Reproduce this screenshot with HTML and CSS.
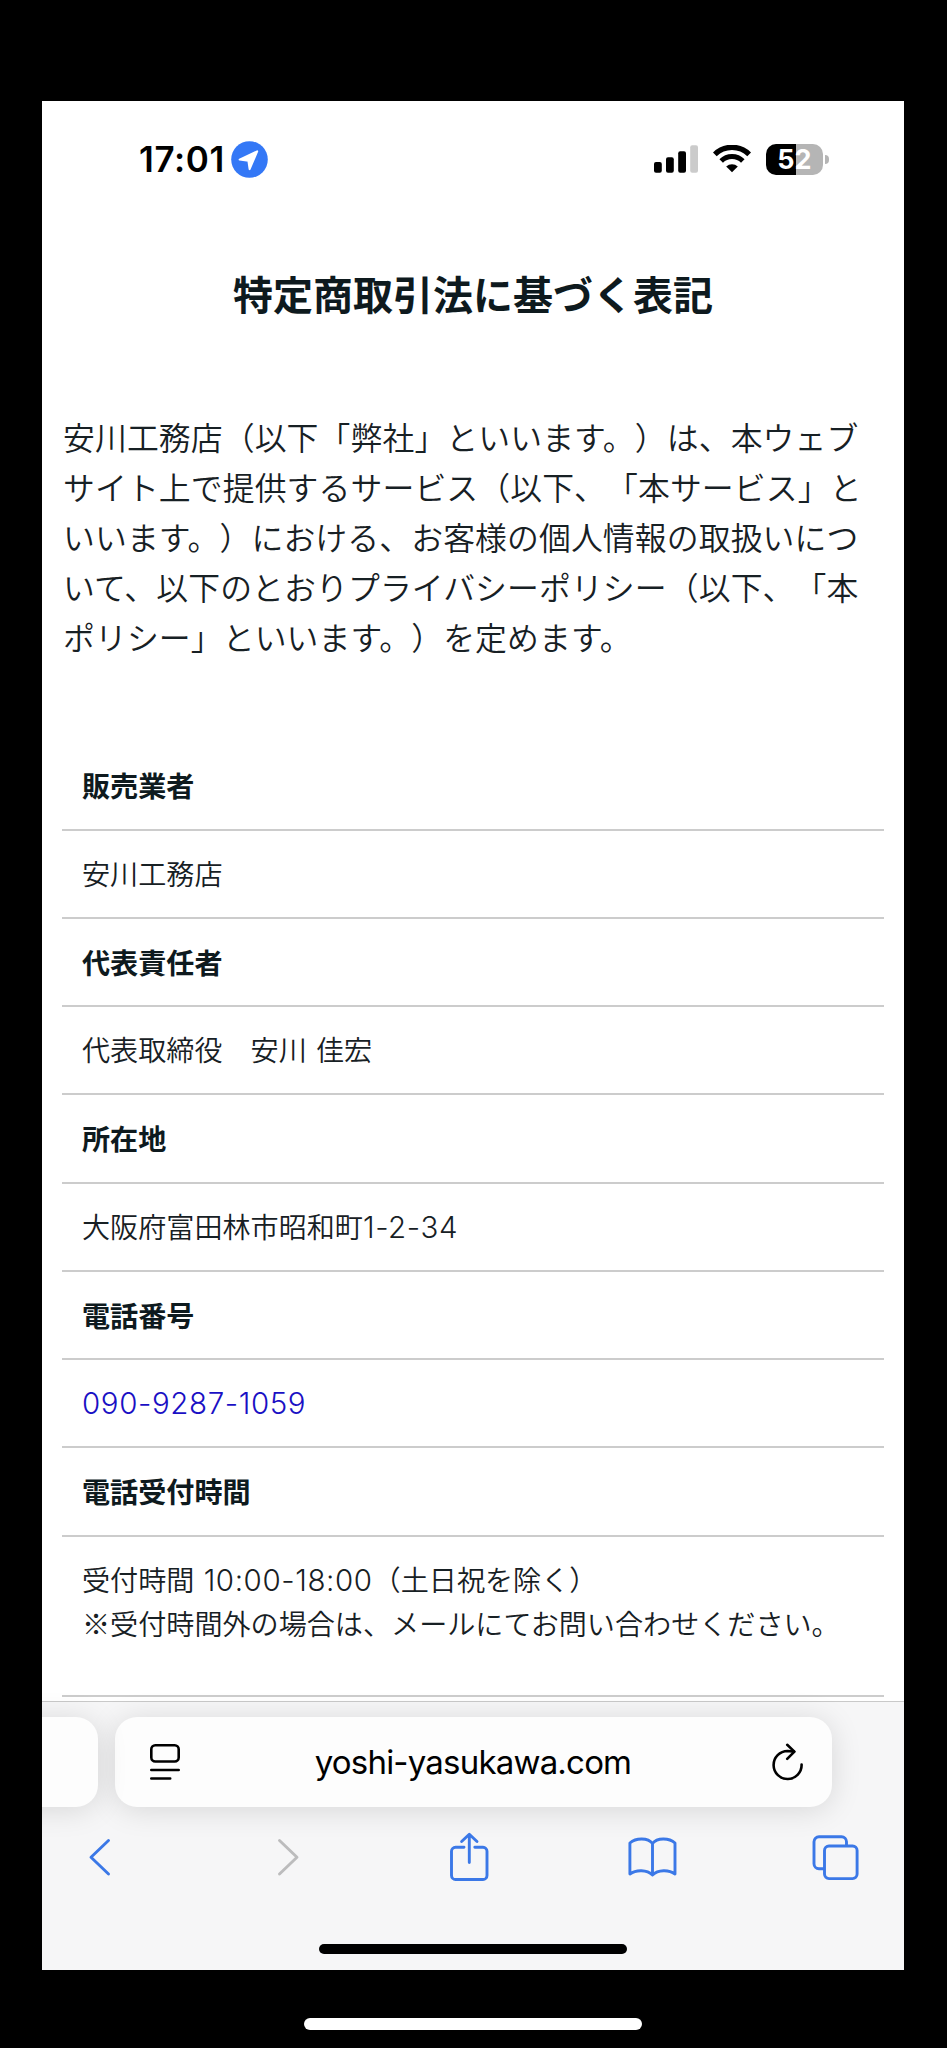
FILE: index.html
```
<!DOCTYPE html>
<html lang="ja">
<head>
    <meta charset="UTF-8">
    <meta name="viewport" content="width=device-width, initial-scale=1.0">
    <title>特定商取引法に基づく表記</title>
    <link rel="stylesheet" href="styles.css">
</head>
<body>

<div class="screen">

    <!-- Status bar -->
    <div class="status-bar">
        <span class="time">17:01</span>
        <svg class="location" width="37" height="37" viewBox="0 0 37 37">
            <circle cx="18.5" cy="18.5" r="18.3" fill="#3478f6"/>
            <path d="M26.2 10.4 L18.6 28.2 L17.4 19.8 L8.6 18.6 Z" fill="#fff" stroke="#fff" stroke-width="2" stroke-linejoin="round"/>
        </svg>
        <div class="status-icons">
            <svg width="44" height="28" viewBox="0 0 44 28">
                <rect x="0" y="17" width="7.8" height="10.7" rx="2"/>
                <rect x="12" y="12.2" width="7.8" height="15.5" rx="2"/>
                <rect x="24.2" y="6.2" width="7.8" height="21.5" rx="2"/>
                <rect x="36.2" y="0.3" width="7.8" height="27.4" rx="2" fill="#cbcbcb"/>
            </svg>
            <svg class="wifi" width="38" height="28" viewBox="0 0 38 28">
                <path d="M1.8 9.4 A24.5 24.5 0 0 1 36.2 9.4" fill="none" stroke="#000" stroke-width="5.4"/>
                <path d="M8.2 15.9 A15.3 15.3 0 0 1 29.8 15.9" fill="none" stroke="#000" stroke-width="5"/>
                <path d="M19 27.3 L13.2 21.5 A8.4 8.4 0 0 1 24.8 21.5 Z"/>
            </svg>
            <div class="battery">52</div>
            <div class="battery-cap"></div>
        </div>
    </div>

    <!-- Page -->
    <main class="page">
        <h1>特定商取引法に基づく表記</h1>
        <p class="intro">安川工務店（以下「弊社」といいます。）は、本ウェブ<br>サイト上で提供するサービス（以下、「本サービス」と<br>いいます。）における、お客様の個人情報の取扱いにつ<br>いて、以下のとおりプライバシーポリシー（以下、「本<br>ポリシー」といいます。）を定めます。</p>
        <dl class="info">
            <dt>販売業者</dt>
            <dd>安川工務店</dd>
            <dt>代表責任者</dt>
            <dd>代表取締役　安川 佳宏</dd>
            <dt>所在地</dt>
            <dd>大阪府富田林市昭和町<span class="num">1-2-34</span></dd>
            <dt>電話番号</dt>
            <dd><a class="num" href="tel:090-9287-1059">090-9287-1059</a></dd>
            <dt>電話受付時間</dt>
            <dd class="hours">受付時間 <span class="num">10:00-18:00</span>（土日祝を除く）<br>※受付時間外の場合は、メールにてお問い合わせください。</dd>
        </dl>
    </main>

    <!-- Browser bar -->
    <div class="browser">
        <div class="tabs">
            <div class="tab prev-tab"></div>
            <div class="tab address">
                <svg width="30" height="36" viewBox="0 0 30 36" fill="none" stroke="#000" stroke-width="2.6" stroke-linecap="round">
                    <rect x="1.3" y="1.3" width="27.4" height="16.2" rx="4"/>
                    <path d="M1.3 26 H28.7 M1.3 34.5 H20.2"/>
                </svg>
                <span class="url">yoshi-yasukawa.com</span>
                <svg width="32" height="38" viewBox="0 0 32 38" fill="none" stroke="#000" stroke-width="2.6" stroke-linecap="round" stroke-linejoin="round">
                    <path d="M30.6 21.5 A14 14 0 1 1 16.6 8 L23 8.6"/>
                    <path d="M16.2 1.8 L23.4 8.6 L16.2 15.8"/>
                </svg>
            </div>
        </div>
        <div class="toolbar">
            <svg width="56" height="56" viewBox="0 0 56 56">
                <path d="M32.5 11.5 L15 28.2 L32.5 45"/>
            </svg>
            <svg class="disabled" width="56" height="56" viewBox="0 0 56 56">
                <path d="M20.5 11.5 L38 28.2 L20.5 45"/>
            </svg>
            <svg width="56" height="56" viewBox="0 0 56 56">
                <path d="M22 18.3 H13.5 A4 4 0 0 0 9.5 22.3 V46.5 A4 4 0 0 0 13.5 50.5 H41 A4 4 0 0 0 45 46.5 V22.3 A4 4 0 0 0 41 18.3 H32.8"/>
                <path d="M27.3 33.5 V5.5 M19.6 12.5 L27.3 5.2 L35 12.5"/>
            </svg>
            <svg width="56" height="56" viewBox="0 0 56 56">
                <path d="M27.5 14.5 C23 8.5 11 8.5 4.9 14 V45 C11 40.5 22 40.5 27.5 46 C33 40.5 44 40.5 50 45 V14 C44 8.5 32 8.5 27.5 14.5 Z M27.5 14.5 V46"/>
            </svg>
            <svg width="56" height="56" viewBox="0 0 56 56">
                <path d="M15 39.8 H11 A5 5 0 0 1 6 34.8 V12.8 A5 5 0 0 1 11 7.8 H33.5 A5 5 0 0 1 38.5 12.8 V16.5"/>
                <rect x="16.5" y="17" width="32.6" height="32.6" rx="4.5"/>
            </svg>
        </div>
        <div class="home-bar"></div>
    </div>
</div>

<div class="outer-bar"></div>

</body>
</html>
```
FILE: styles.css
```
* {
    box-sizing: border-box;
}
body {
    margin: 0;
    height: 2048px;
    padding: 101px 43px 0 42px;
    background-color: #000;
    color: #172024;
    font-family: 'Noto Sans CJK JP', sans-serif;
    text-spacing-trim: space-all;
    overflow: hidden;
}
.screen {
    display: flex;
    flex-direction: column;
    height: 1869px;
    background-color: #fff;
    overflow: hidden;
}

/* status bar */
.status-bar {
    display: flex;
    align-items: center;
    flex: none;
    height: 116px;
    padding: 0 75px 0 97px;
    color: #000;
    font-family: Inter, sans-serif;
}
.time {
    width: 88px;
    font-size: 35px;
    font-weight: 600;
    letter-spacing: 0.6px;
    white-space: nowrap;
}
.location {
    margin-left: 4px;
}
.status-icons {
    display: flex;
    align-items: center;
    margin-left: auto;
}
.wifi {
    margin-left: 15px;
}
.battery {
    width: 57px;
    height: 31px;
    margin-left: 15px;
    border-radius: 10px;
    background: linear-gradient(to right, #000 30px, #b5b5b5 30px);
    color: #fff;
    font-size: 27px;
    font-weight: 700;
    line-height: 31px;
    text-align: center;
}
.battery-cap {
    width: 4px;
    height: 9px;
    margin-left: 2px;
    border-radius: 0 4px 4px 0;
    background-color: #b5b5b5;
}

/* page */
.page {
    flex: none;
    height: 1484px;
    padding: 46px 20px 0;
    overflow: hidden;
}
h1 {
    margin: 0;
    font-size: 40px;
    line-height: 60px;
    text-align: center;
    color: #0e1a1e;
}
.intro {
    margin: 88px 0 0 1px;
    font-size: 31.85px;
    font-weight: 350;
    line-height: 50.1px;
    letter-spacing: 0.1px;
    white-space: nowrap;
}
.info {
    margin: 81px 0 0;
    font-size: 28.1px;
    line-height: 44.25px;
}
.info dt,
.info dd {
    margin: 0;
    height: 88.25px;
    padding: 21px 20px;
    border-bottom: 2px solid #ccc;
    white-space: nowrap;
}
.info dt {
    font-weight: 700;
    color: #0e1a1e;
}
.info dd {
    padding-top: 20px;
    font-weight: 350;
    word-spacing: 3px;
}
.info .hours {
    height: 160px;
}
.num {
    font-family: Inter, sans-serif;
    font-size: 29.5px;
    font-weight: 300;
    line-height: 1;
    letter-spacing: 0.6px;
}
a {
    color: #1a0fc4;
    text-decoration: none;
}

/* browser bar */
.browser {
    flex: 1;
    border-top: 1px solid #c9c9c9;
    background-color: #f6f6f7;
}
.tabs {
    display: flex;
    height: 105px;
    padding-top: 15px;
}
.tab {
    flex: none;
    height: 90px;
    border-radius: 22px;
    background-color: #fdfdfd;
    box-shadow: 0 3px 30px rgba(0, 0, 0, 0.13);
}
.prev-tab {
    z-index: 1;
    width: 116px;
    margin-left: -60px;
}
.address {
    display: flex;
    align-items: center;
    justify-content: space-between;
    width: 717px;
    margin-left: 17px;
    padding: 0 29px 0 35px;
}
.url {
    margin-right: 5px;
    color: #000;
    font-family: Inter, sans-serif;
    font-size: 33px;
    letter-spacing: -0.8px;
}
.toolbar {
    display: flex;
    justify-content: space-between;
    margin-top: 22px;
    padding: 0 40px 0 34px;
}
.toolbar svg {
    fill: none;
    stroke: #3b78e7;
    stroke-width: 2.9;
    stroke-linecap: round;
    stroke-linejoin: round;
}
.toolbar .disabled {
    stroke: #bcbcbd;
}
.home-bar {
    width: 308px;
    height: 10px;
    margin: 59px auto 0;
    border-radius: 5px;
    background-color: #000;
}
.outer-bar {
    width: 338px;
    height: 12px;
    margin: 48px auto 0;
    border-radius: 6px;
    background-color: #fff;
}
```
